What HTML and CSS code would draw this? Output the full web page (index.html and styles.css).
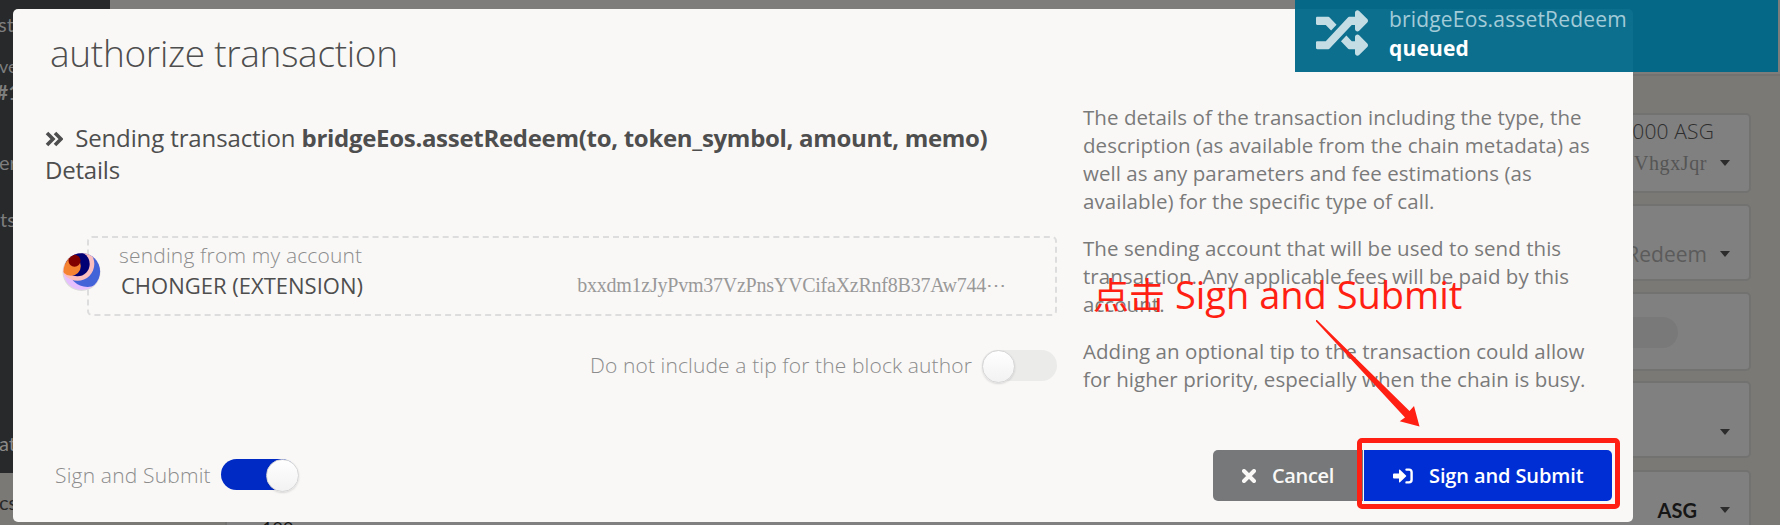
FILE: index.html
```
<!DOCTYPE html>
<html lang="en">
<head>
<meta charset="utf-8">
<title>Authorize transaction</title>
<link rel="stylesheet" href="styles.css">
</head>
<body>
<div class="page">
  <aside class="sidebar">
    <div class="side-item side-net">st A</div>
    <div class="side-item side-small">ve</div>
    <div class="side-item side-strong">#1</div>
    <div class="side-item side-er">er</div>
    <div class="side-item side-ts">ts</div>
    <div class="side-item side-at">at</div>
    <div class="side-item side-cs">cs</div>
  </aside>
  <main class="content">
    <div class="tabs"></div>
    <div class="fields">
      <div class="field field-a">
        <div class="balance">000 ASG</div>
        <div class="row"><span class="mono">VhgxJqr</span><i class="caret"></i></div>
      </div>
      <div class="field field-b"><div class="row"><span class="method">Redeem</span><i class="caret"></i></div></div>
      <div class="field field-c"><i class="pill"></i></div>
      <div class="field field-d"><div class="row"><i class="caret"></i></div></div>
      <div class="field field-e"><span class="amount">100</span><div class="row"><span class="unit">ASG</span><i class="caret"></i></div></div>
    </div>
  </main>
</div>

<section class="modal">
  <h1 class="title">authorize transaction</h1>
  <div class="columns">
    <div class="main-col">
      <div class="summary">
        <svg class="chevrons" viewBox="0 0 18 16"><path d="M2 2l6 6-6 6M10 2l6 6-6 6" fill="none" stroke="#4e4e4e" stroke-width="3.6"/></svg>
        <span>Sending transaction</span> <b>bridgeEos.assetRedeem(to, token_symbol, amount, memo)</b>
        <div class="details">Details</div>
      </div>
      <div class="account">
        <svg class="avatar" viewBox="0 0 40 40">
          <defs><clipPath id="disc"><circle cx="19.800" cy="19.500" r="18.300"/></clipPath></defs>
          <circle cx="19.500" cy="20" r="19" fill="#dcdcdc"/>
          <g clip-path="url(#disc)">
            <rect width="40" height="40" fill="#e6bfff"/>
            <circle cx="25.500" cy="15.500" r="19.500" fill="#4363d8"/>
            <circle cx="15.500" cy="12" r="16.800" fill="#fabebe"/>
            <circle cx="15.500" cy="12" r="12.200" fill="#000075"/>
            <circle cx="9" cy="14" r="9.800" fill="#f58231"/>
            <circle cx="12.500" cy="8.700" r="6" fill="#800000"/>
          </g>
        </svg>
        <div class="account-label">sending from my account</div>
        <div class="account-row">
          <span>CHONGER (EXTENSION)</span>
          <span class="address">bxxdm1zJyPvm37VzPnsYVCifaXzRnf8B37Aw744<span class="dots">⋯</span></span>
        </div>
      </div>
      <div class="tip">Do not include a tip for the block author<i class="toggle"></i></div>
    </div>
    <div class="help-col">
      <p>The details of the transaction including the type, the<br>description (as available from the chain metadata) as<br>well as any parameters and fee estimations (as<br>available) for the specific type of call.</p>
      <p>The sending account that will be used to send this<br>transaction. Any applicable fees will be paid by this<br>account.</p>
      <p>Adding an optional tip to the transaction could allow<br>for higher priority, especially when the chain is busy.</p>
    </div>
  </div>
  <footer class="actions">
    <div class="sign">Sign and Submit<i class="toggle toggle-on"></i></div>
    <div class="buttons">
      <button class="btn btn-cancel"><svg class="cross" viewBox="0 0 14 14"><path d="M2 2l10 10M12 2L2 12" stroke="#f9f8f7" stroke-width="4" stroke-linecap="round"/></svg>Cancel</button>
      <button class="btn btn-submit"><svg class="enter" viewBox="0 0 20 16"><path d="M1 5.500h5V2.200q0-1.200 1-.4l6 5.600q.6.600 0 1.200l-6 5.600q-1 .8-1-.4V10.500H1q-1 0-1-1v-3q0-1 1-1z" fill="#fff"/><path d="M13.500 1.600H16q2.600 0 2.600 2.600v7.600q0 2.600-2.600 2.600h-2.500" fill="none" stroke="#fff" stroke-width="2.400" stroke-linecap="round"/></svg>Sign and Submit</button>
    </div>
  </footer>
</section>

<div class="status">
  <svg class="shuffle" viewBox="0 0 512 512"><path fill="#c4dde5" d="M504.971 359.029c9.373 9.373 9.373 24.569 0 33.941l-80 79.984c-15.010 15.010-40.971 4.490-40.971-16.971V416h-58.785a12.004 12.004 0 0 1-8.773-3.812l-70.556-75.596 53.333-57.143L352 336h32v-39.981c0-21.438 25.943-31.998 40.971-16.971l80 79.981zM12 176h84l52.781 56.551 53.333-57.143-70.556-75.596A11.999 11.999 0 0 0 122.785 96H12c-6.627 0-12 5.373-12 12v56c0 6.627 5.373 12 12 12zm372 0v39.984c0 21.460 25.961 31.980 40.971 16.971l80-79.984c9.373-9.373 9.373-24.569 0-33.941l-80-79.981C409.943 24.021 384 34.582 384 56.019V96h-58.785a12.004 12.004 0 0 0-8.773 3.812L96 336H12c-6.627 0-12 5.373-12 12v56c0 6.627 5.373 12 12 12h110.785c3.326 0 6.503-1.381 8.773-3.812L352 176h32z"/></svg>
  <div class="status-text"><div>bridgeEos.assetRedeem</div><b>queued</b></div>
</div>

<div class="note"><span class="note-cjk">点击</span> Sign and Submit</div>
<svg class="arrow" viewBox="0 0 110 110"><path d="M0 0L1 0L93.500 91L98 86L103.500 106.500L83.700 101.200L89 97.500L0 1.500z" fill="#ff1f13"/></svg>
<div class="frame"></div>
</body>
</html>
```

FILE: styles.css
```
* { box-sizing: border-box; }
body {
  margin: 0;
  width: 1780px;
  height: 525px;
  overflow: hidden;
  position: relative;
  background: #7a7976;
  color: #4e4e4e;
  font-family: "Open Sans", "Noto Sans", sans-serif;
  white-space: nowrap;
}

/* Dimmed page */
.page { display: flex; height: 525px; }
.sidebar {
  width: 110px;
  height: 473px;
  background: #27292b;
  color: #7d7d7d;
  font: 20px/28px Lato, sans-serif;
}
.side-item { height: 28px; }
.side-net { margin-top: 10px; text-indent: -2px; }
.side-small { margin-top: 14px; font-size: 18px; text-indent: -1px; }
.side-strong { font-weight: 700; font-size: 21px; margin-top: -2px; text-indent: -4px; }
.side-er { margin-top: 42px; text-indent: -1px; }
.side-ts { margin-top: 29px; }
.side-at { margin-top: 196px; color: #8b8a88; text-indent: -1px; }
.side-cs { margin-top: 31px; color: #282828; text-indent: -1px; }
.content { flex: 1; }
.tabs { height: 76px; background: #7e7d7c; border-bottom: 2px solid #737270; }
.fields { padding: 37px 29px 0 115px; }
.field {
  border: 2px solid #727271;
  border-radius: 5px;
  background: #808080;
  overflow: hidden;
  padding-right: 19px;
}
.field-a { height: 80px; margin-bottom: 11px; padding-top: 2px; }
.field-b { height: 77px; margin-bottom: 11px; padding-top: 34px; }
.field-c { height: 79px; margin-bottom: 10px; padding: 23px 71px 0 0; }
.field-d { height: 77px; margin-bottom: 12px; padding-top: 35px; }
.field-e { height: 79px; position: relative; padding-top: 24px; }
.row { display: flex; justify-content: flex-end; align-items: center; height: 28px; }
.field-a .row { margin-top: 4px; }
.balance { text-align: right; padding-right: 16px; font-size: 21px; line-height: 28px; font-weight: 300; color: #2e2e2e; letter-spacing: .15px; }
.caret { border: 5.5px solid transparent; border-top: 6px solid #2c2c2c; border-bottom: 0; margin-left: 13px; }
.method { font-size: 21px; color: #5b5b5b; }
.pill { display: block; margin-left: auto; width: 76px; height: 31px; border-radius: 16px; background: #797979; }
.unit { font: 700 20px Lato, sans-serif; color: #161616; margin-right: 10px; }
.amount { position: absolute; left: 35px; top: 42px; font: 18px/28px Lato, sans-serif; color: #161616; }
.mono { font-family: "Liberation Serif", serif; font-size: 20px; letter-spacing: .6px; color: #555; }

/* Dialog */
.modal {
  position: absolute;
  left: 13px;
  top: 9px;
  width: 1620px;
  height: 513px;
  border-radius: 5px;
  background: #f9f8f7;
}
.title { margin: 0; height: 92px; padding: 18px 0 0 37px; font-size: 37px; line-height: 52px; font-weight: 300; letter-spacing: -.3px; }
.columns { display: flex; height: 329px; }
.main-col { width: 1044px; padding-left: 32px; }
.summary { font-size: 24px; line-height: 32px; padding-top: 21px; height: 135px; letter-spacing: -.12px; }
.summary b { letter-spacing: -.3px; }
.details { letter-spacing: -.2px; }
.chevrons { width: 18px; height: 16px; margin-right: 6px; }
.account {
  position: relative;
  margin-left: 42px;
  height: 80px;
  border: 2px dashed #ddd;
  border-radius: 5px;
  padding: 2px 0 0 30px;
}
.avatar { position: absolute; left: -27px; top: 14px; width: 40px; height: 40px; }
.account-label { font-size: 21px; line-height: 30px; font-weight: 300; color: #8c8c8c; letter-spacing: .17px; }
.account-row { display: flex; justify-content: space-between; line-height: 31px; padding: 0 49px 0 2px; font-size: 22px; }
.address { font-family: "Liberation Serif", serif; font-size: 20px; letter-spacing: -.24px; color: #999; }
.dots { display: inline-block; width: 20px; }
.tip { display: flex; justify-content: flex-end; align-items: center; height: 31px; margin-top: 34px; font-size: 21px; line-height: 29px; font-weight: 300; color: #8c8c8c; letter-spacing: .12px; }
.toggle { position: relative; width: 75px; height: 31px; border-radius: 16px; background: #ebebea; margin-left: 10px; }
.toggle::after {
  content: "";
  position: absolute;
  left: 0;
  top: 0;
  width: 31px;
  height: 31px;
  border-radius: 50%;
  background: linear-gradient(#fff, #f2f2f2);
  border: 1px solid #d5d5d5;
  box-shadow: 0 1px 2px rgba(34, 36, 38, .15);
}
.toggle-on { width: 76px; background: #002ac4; }
.toggle-on::after { left: 45px; }
.help-col { padding: 2px 0 0 26px; font-size: 20.5px; line-height: 28px; letter-spacing: .05px; color: #7a7a7a; }
.help-col p { margin: 0 0 19px; }
.actions { display: flex; justify-content: space-between; padding: 20px 21px 0 42px; }
.sign { display: flex; align-items: center; height: 49px; font-size: 21px; font-weight: 300; color: #8c8c8c; letter-spacing: .18px; }
.buttons { display: flex; gap: 1px; }
.btn { display: flex; align-items: center; height: 51px; border: 0; padding: 0; font: 600 20px "Open Sans", sans-serif; color: #fff; letter-spacing: -.12px; }
.btn-cancel { width: 150px; padding-left: 29px; background: #767879; border-radius: 5px 0 0 5px; color: #f9f8f7; letter-spacing: -.35px; }
.btn-submit { width: 248px; padding-left: 29px; background: #002ed5; border-radius: 0 5px 5px 0; }
.cross { width: 14px; height: 14px; margin-right: 16px; }
.enter { width: 20px; height: 16px; margin-right: 16px; }

/* Queue notification */
.status {
  position: absolute;
  left: 1295px;
  top: 0;
  width: 483px;
  height: 72px;
  display: flex;
  background: rgba(0, 103, 136, .95);
  color: #fff;
}
.shuffle { width: 52px; height: 52px; margin: 7px 21px 0 21px; }
.status-text { font-size: 21px; line-height: 29px; padding-top: 5px; letter-spacing: .17px; }
.status-text div { color: #a3cbd8; }

/* Tutorial annotations */
.note { position: absolute; left: 1093px; top: 267px; font-size: 38px; line-height: 52px; color: #ff1f13; }
.note-cjk { font-family: "Noto Sans CJK SC", sans-serif; font-size: 36px; }
.arrow { position: absolute; left: 1316px; top: 320px; width: 110px; height: 110px; }
.frame { position: absolute; left: 1357px; top: 438px; width: 263px; height: 71px; border: 5px solid #ff1f13; border-radius: 5px; }
```
